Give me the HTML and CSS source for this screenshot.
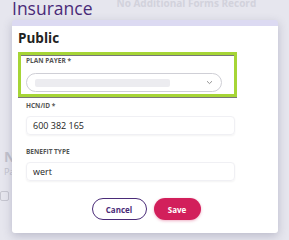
FILE: index.html
```html
<!DOCTYPE html>
<html lang="en">
<head>
    <meta charset="UTF-8">
    <meta name="viewport" content="width=device-width, initial-scale=1.0">
    <title>Insurance</title>
    <link rel="stylesheet" href="styles.css">
</head>
<body>
    <div class="page">
        <div class="page-header">
            <h1>Insurance</h1>
            <span class="no-forms">No Additional Forms Record</span>
        </div>
        <div class="behind">
            <div class="behind-title">N</div>
            <div class="behind-text">Pa</div>
            <div class="behind-text small">E</div>
            <div class="behind-check"></div>
        </div>
    </div>

    <div class="modal">
        <h2 class="modal-title">Public</h2>
        <form class="modal-form">
            <div class="form-group highlight">
                <label>Plan Payer *</label>
                <div class="select">
                    <span class="redacted"></span>
                    <svg class="chevron" width="7" height="5" viewBox="0 0 7 5">
                        <path d="M1 1.2 L3.5 3.6 L6 1.2" fill="none" stroke="#888" stroke-width="0.9"/>
                    </svg>
                </div>
            </div>
            <div class="form-group">
                <label>HCN/ID *</label>
                <div class="form-control">600 382 165</div>
            </div>
            <div class="form-group">
                <label>Benefit Type</label>
                <div class="form-control">wert</div>
            </div>
            <div class="actions">
                <button type="button" class="btn btn-cancel">Cancel</button>
                <button type="button" class="btn btn-save">Save</button>
            </div>
        </form>
    </div>
</body>
</html>
```

FILE: styles.css
```css
body {
    margin: 0;
    width: 289px;
    height: 240px;
    overflow: hidden;
    font-family: "Open Sans", "Noto Sans", sans-serif;
    background-color: #e6e6ee;
    position: relative;
}

.page-header {
    display: flex;
    align-items: flex-start;
    padding-left: 12px;
}

.page-header h1 {
    margin: 0;
    margin-top: -4px;
    font-size: 17.5px;
    font-weight: 400;
    color: #4a2b78;
    line-height: 24px;
}

.no-forms {
    margin-left: 24px;
    margin-top: -4px;
    font-size: 10px;
    font-weight: 700;
    color: #d2d2dc;
}

.behind {
    padding-top: 128px;
    padding-left: 4px;
    color: #c2c2cc;
}

.behind-title {
    font-size: 14px;
    font-weight: 700;
    line-height: 18px;
}

.behind-text {
    font-size: 9px;
    line-height: 11px;
}

.behind-text.small {
    padding-left: 8px;
}

.behind-check {
    margin-top: 3px;
    margin-left: -4px;
    width: 7px;
    height: 8px;
    border: 1px solid #c6c6d0;
    border-radius: 2px;
}

/* modal sits over the page */
.modal {
    position: absolute;
    left: 12px;
    top: 20px;
    width: 266px;
    height: 213px;
    box-sizing: border-box;
    background-color: #fff;
    border-top: 6px solid #dcdaf2;
    border-radius: 3px;
    box-shadow: 0 3px 10px rgba(60, 60, 100, 0.25);
    padding: 2px 41px 0 6px;
}

.modal-title {
    margin: 0;
    font-size: 13.5px;
    font-weight: 700;
    color: #222;
    line-height: 20px;
}

.modal-form {
    margin-top: 4px;
}

.form-group {
    padding: 0 2px 0 8px;
}

.form-group label {
    display: block;
    font-size: 6.5px;
    font-weight: 700;
    text-transform: uppercase;
    color: #555;
    line-height: 10px;
    margin-bottom: 5px;
}

.highlight {
    border: 3px solid #a6d536;
    box-shadow: inset 0 1px 0 #777, 0 1px 0 #777;
    padding: 1px 12px 2px 5px;
    margin-bottom: 4px;
}

.highlight label {
    margin-bottom: 7px;
}

.select {
    height: 17px;
    border: 1px solid #cfcfd6;
    border-radius: 10px;
    display: flex;
    align-items: center;
    padding: 0 8px;
}

.redacted {
    width: 135px;
    height: 8px;
    background-color: #ececf0;
    border-radius: 2px;
}

.chevron {
    margin-left: auto;
}

.form-control {
    height: 19px;
    box-sizing: border-box;
    border: 1px solid #f0f0f4;
    border-radius: 4px;
    box-shadow: 0 1px 2px rgba(0, 0, 0, 0.05);
    font-size: 9px;
    color: #222;
    line-height: 17px;
    padding-left: 6px;
    margin-bottom: 12px;
}

.actions {
    display: flex;
    justify-content: center;
    gap: 7px;
    margin-top: 17px;
    padding-left: 37px;
}

.btn {
    height: 22px;
    border-radius: 11px;
    font-family: "Open Sans", "Noto Sans", sans-serif;
    font-size: 8px;
    font-weight: 700;
    cursor: pointer;
    padding: 0;
}

.btn-cancel {
    width: 55px;
    background-color: #fff;
    color: #4a2b78;
    border: 1.5px solid #4a2b78;
}

.btn-save {
    width: 47px;
    background-color: #d21f5b;
    color: #fff;
    border: none;
    box-shadow: 0 1px 3px rgba(210, 31, 91, 0.35);
}
```
